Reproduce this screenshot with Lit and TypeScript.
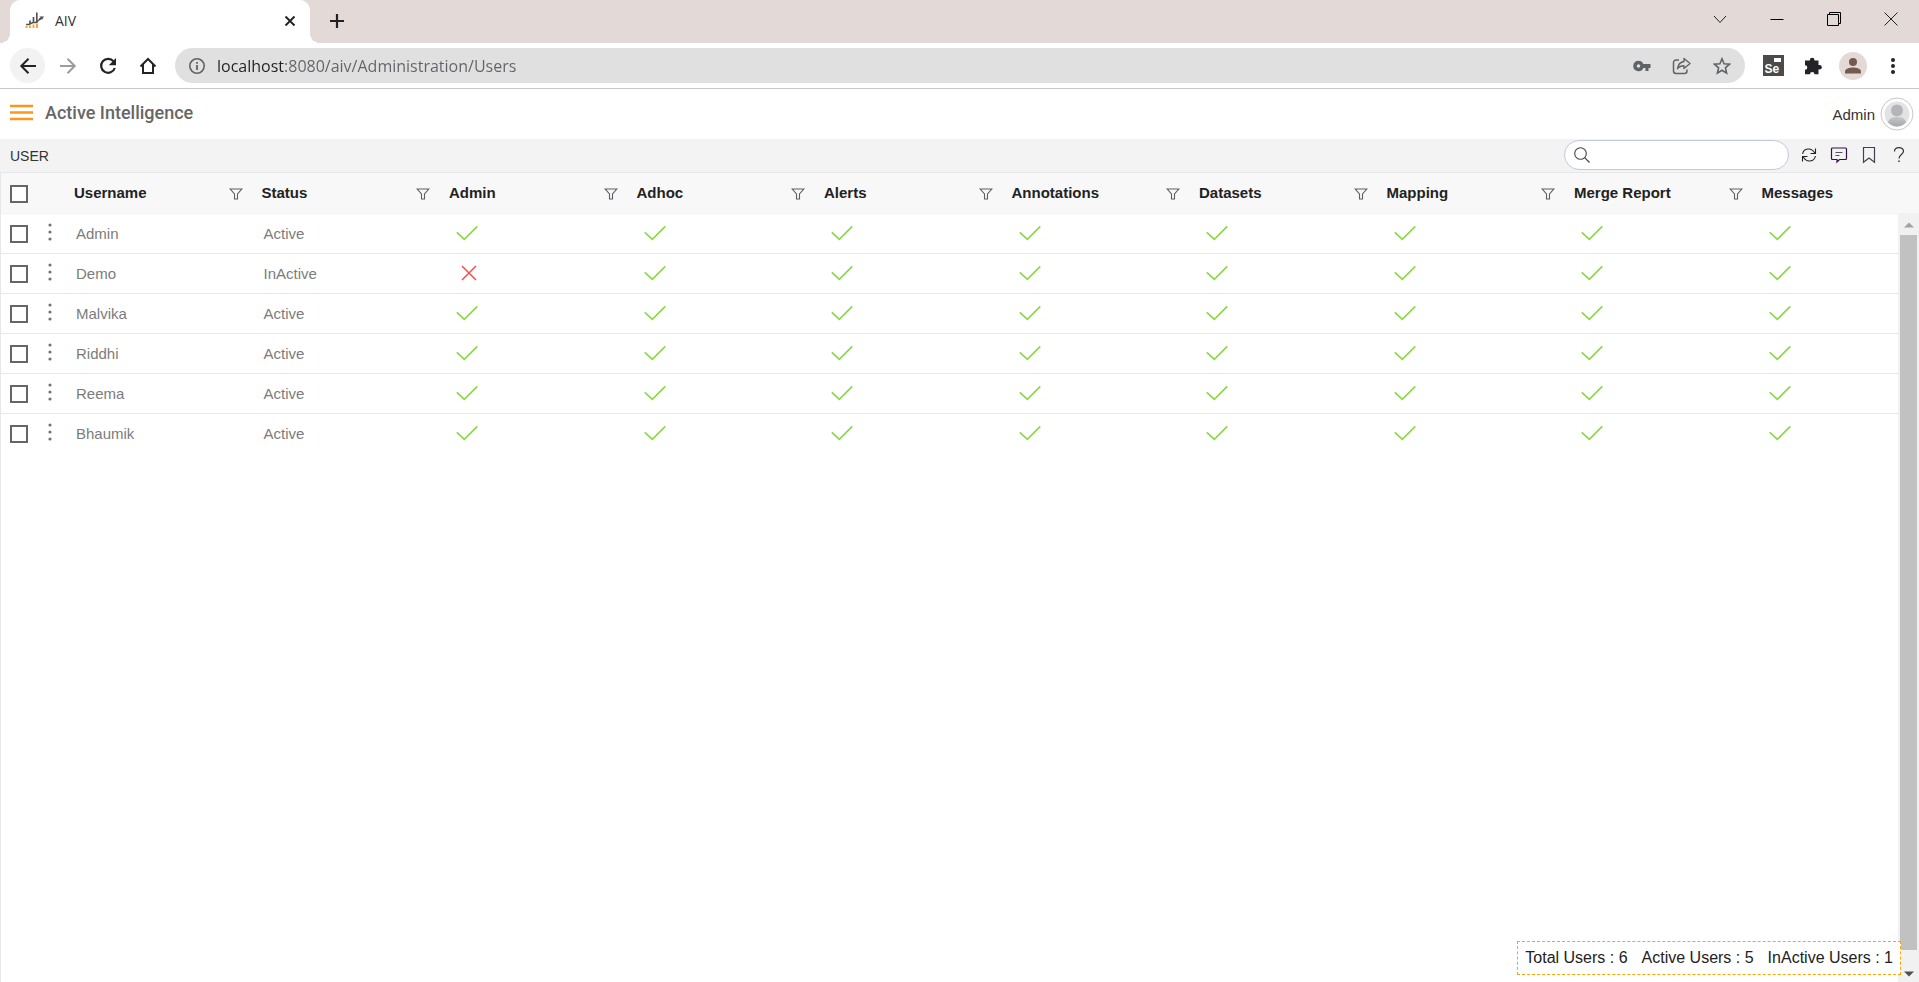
import { LitElement, html, css, svg, nothing } from "lit";
import { customElement, state } from "lit/decorators.js";

interface User {
  name: string;
  active: boolean;
  denied: string[];
}

const PERMISSIONS = ["Admin", "Adhoc", "Alerts", "Annotations", "Datasets", "Mapping", "Merge Report", "Messages"];
const COLUMNS = ["Username", "Status", ...PERMISSIONS];

const USERS: User[] = [
  { name: "Admin", active: true, denied: [] },
  { name: "Demo", active: false, denied: ["Admin"] },
  { name: "Malvika", active: true, denied: [] },
  { name: "Riddhi", active: true, denied: [] },
  { name: "Reema", active: true, denied: [] },
  { name: "Bhaumik", active: true, denied: [] },
];

const icon = (w: number, h: number, body: unknown) =>
  html`<svg width=${w} height=${h} viewBox="0 0 ${w} ${h}" fill="none" aria-hidden="true">${body}</svg>`;

const icons = {
  favicon: icon(20, 17, svg`
    <path d="M1 12.5H4L8 10.500 11 10.500 17.500 5" stroke="#555" stroke-width="1.500"/>
    <path d="M14.500 4.500H19L17 8Z" fill="#555"/>
    <path d="M5 12V8.500M8.500 11V5M11.800 11V.5M15 8V6" stroke="#555" stroke-width="1.700"/>
    <path d="M1.500 14V16M5 13.500V16M8.500 12.500V16M12 11.500V16" stroke="#f5a733" stroke-width="2"/>`),
  tabClose: icon(12, 12, svg`<path d="M1.500 1.500 10.500 10.500M10.500 1.500 1.500 10.500" stroke="#222" stroke-width="1.900"/>`),
  plus: icon(16, 16, svg`<path d="M8 1V15M1 8H15" stroke="#222" stroke-width="2.200"/>`),
  chevron: icon(16, 16, svg`<path d="M2 5 8 11.500 14 5" stroke="#222" stroke-width="1"/>`),
  minimize: icon(14, 14, svg`<path d="M.5 7.500H13.500" stroke="#000" stroke-width="1"/>`),
  restore: icon(14, 14, svg`<path d="M.5 2.500H11.500V13.500H.5ZM2.500 2.500V.5H13.500V11.500H11.500" stroke="#000" stroke-width="1"/>`),
  close: icon(14, 14, svg`<path d="M.5 .5 13.500 13.500M13.500 .5.5 13.500" stroke="#222" stroke-width="1"/>`),
  back: icon(18, 18, svg`<path d="M17 9H2.500M9.500 1.800 2.300 9 9.500 16.200" stroke="#222428" stroke-width="2"/>`),
  forward: icon(18, 18, svg`<path d="M1 9H15.500M8.500 1.800 15.700 9 8.500 16.200" stroke="#9b9c9e" stroke-width="2"/>`),
  reload: icon(18, 18, svg`<path d="M14.600 4.400A7 7 0 1 0 15.800 11" stroke="#222428" stroke-width="2.200"/><path d="M17 1V8.200H9.800Z" fill="#222428"/>`),
  home: icon(18, 18, svg`<path d="M4 7V16H14V7M1.500 9.500 9 2 16.500 9.500" stroke="#222428" stroke-width="2"/>`),
  info: icon(18, 18, svg`<circle cx="9" cy="9" r="7.200" stroke="#5f6368" stroke-width="1.600"/><path d="M9 8V13M9 5V6.800" stroke="#5f6368" stroke-width="1.800"/>`),
  key: icon(18, 12, svg`<path fill-rule="evenodd" d="M5.500 .8A5.200 5.200 0 1 0 10.300 8H12.500V11H15.500V8H17.500V4H10.300A5.200 5.200 0 0 0 5.500.8ZM5.500 4.200A1.800 1.800 0 1 1 5.500 7.800 1.800 1.800 0 0 1 5.500 4.200Z" fill="#5f6368"/>`),
  share: icon(20, 18, svg`<path d="M7 3H4A2.500 2.500 0 0 0 1.500 5.500V14A2.500 2.500 0 0 0 4 16.500H12.500A2.500 2.500 0 0 0 15 14V12.500" stroke="#5f6368" stroke-width="1.500"/><path d="M12 1.500 18 6.500 12 11.500V8.700C9 8.700 7 9.600 5.500 11.700 6 8 8.200 5 12 4.500Z" stroke="#5f6368" stroke-width="1.400" stroke-linejoin="round"/>`),
  star: icon(18, 18, svg`<path d="M9 1.800 11.100 6.700 16.500 7.200 12.400 10.800 13.600 16.100 9 13.300 4.400 16.100 5.600 10.800 1.500 7.200 6.900 6.700Z" stroke="#5f6368" stroke-width="1.600"/>`),
  puzzle: icon(18, 18, svg`<path d="M6 3.500A2.200 2.200 0 0 1 10.400 3.500H14.500V7.900A2.200 2.200 0 0 1 14.500 12.300V17.200H10.500A2.200 2.200 0 0 0 6 17.200H1V12.800A2.300 2.300 0 0 0 1 8.200V3.500Z" fill="#222428"/><circle cx="8.200" cy="3" r="2.200" fill="#222428"/><circle cx="15.500" cy="10.200" r="2.300" fill="#222428"/>`),
  person: icon(28, 28, svg`<circle cx="14" cy="14" r="14" fill="#e3dad8"/><circle cx="14" cy="10" r="4" fill="#755b4e"/><path d="M6 21.500V19.500C6 16.800 10.500 15.500 14 15.500S22 16.800 22 19.500V21.500Z" fill="#755b4e"/>`),
  kebab: icon(6, 18, svg`<circle cx="3" cy="3" r="2" fill="#222428"/><circle cx="3" cy="9" r="2" fill="#222428"/><circle cx="3" cy="15" r="2" fill="#222428"/>`),
  menu: icon(23, 17, svg`<path d="M0 2H23M0 8.500H23M0 15H23" stroke="#fa981c" stroke-width="2.400"/>`),
  avatar: icon(34, 34, svg`
    <defs>
      <linearGradient id="av" x1="0" y1="0" x2="0" y2="1"><stop offset="0" stop-color="#c6c7c9"/><stop offset="1" stop-color="#a4a5a8"/></linearGradient>
      <clipPath id="ac"><circle cx="17" cy="17" r="12.500"/></clipPath>
    </defs>
    <circle cx="17" cy="17" r="16" fill="#fff" stroke="#c8c8c8" stroke-width="1"/>
    <circle cx="17" cy="17" r="12.500" fill="#e2e3e5"/>
    <g clip-path="url(#ac)"><circle cx="17" cy="13.500" r="6" fill="#b4b5b8"/><path d="M8 30C7 23 10 20 17 20S27 23 26 30Z" fill="url(#av)"/></g>`),
  search: icon(18, 18, svg`<circle cx="7.500" cy="7.500" r="5.800" stroke="#444" stroke-width="1.100"/><path d="M11.700 11.700 16.500 16.500" stroke="#444" stroke-width="1.200"/>`),
  refresh: icon(16, 16, svg`<path d="M1.600 7C2.500 1.200 10.500-.2 14 6.500M14.500 1.500V6.500H9.500M14.400 9C13.500 14.800 5.500 16.200 2 9.500M1.500 14.500V9.500H6.500" stroke="#222" stroke-width="1.100"/>`),
  comment: icon(18, 18, svg`<path d="M2.500 2H15.500A1 1 0 0 1 16.500 3V12.500A1 1 0 0 1 15.500 13.500H9.500L7 16V13.500H2.500A1 1 0 0 1 1.500 12.500V3A1 1 0 0 1 2.500 2Z" stroke="#3a0f45" stroke-width="1.200"/><path d="M5.500 6.500H12.500M5.500 9.500H9.500" stroke="#555" stroke-width="1.200"/>`),
  bookmark: icon(16, 18, svg`<path d="M2.500 1.500H13.500V16.300L8 12 2.500 16.300Z" stroke="#3d4450" stroke-width="1.200"/>`),
  help: icon(12, 18, svg`<path d="M1.500 5.500C1.500 .5 10.500 .5 10.500 5.200 10.500 8.500 6 8.500 6 12.500" stroke="#333" stroke-width="1.200"/><path d="M6 14.500V16" stroke="#333" stroke-width="1.500"/>`),
  filter: icon(14, 12, svg`<path d="M1.200 1H12.800L8.500 6V11H5.500V6Z" stroke="#5a5f66" stroke-width="1.100"/>`),
  check: icon(22, 16, svg`<path d="M.8 7.300 8.300 14.400 21.300 1.300" stroke="#8bd847" stroke-width="1.700"/>`),
  cross: icon(16, 16, svg`<path d="M1 1 15 15M15 1 1 15" stroke="#f0504c" stroke-width="1.500"/>`),
  rowDots: icon(4, 18, svg`<circle cx="2" cy="2" r="1.600" fill="#757575"/><circle cx="2" cy="9" r="1.600" fill="#757575"/><circle cx="2" cy="16" r="1.600" fill="#757575"/>`),
  up: icon(10, 6, svg`<path d="M0 5.500 5 .5 10 5.500Z" fill="#a3a3a3"/>`),
  down: icon(10, 6, svg`<path d="M0 .5 5 5.500 10 .5Z" fill="#505050"/>`),
};

const base = css`
  * { box-sizing: border-box; }
  button {
    display: flex;
    align-items: center;
    justify-content: center;
    flex: none;
    padding: 0;
    border: 0;
    background: none;
    font: inherit;
    color: inherit;
  }
  svg { display: block; flex: none; }
`;

@customElement("browser-frame")
export class BrowserFrame extends LitElement {
  static styles = [base, css`
    :host { display: block; flex: none; font-family: "Open Sans", "Noto Sans", sans-serif; }
    .strip { display: flex; align-items: stretch; height: 43px; padding-left: 10px; background: #e3dad8; }
    .tab {
      position: relative;
      display: flex;
      align-items: center;
      gap: 10px;
      width: 300px;
      padding: 0 10px 2px 15px;
      border-radius: 10px 10px 0 0;
      background: #fff;
      color: #333;
      font-size: 14px;
    }
    .tab::before, .tab::after {
      content: "";
      position: absolute;
      bottom: 0;
      width: 10px;
      height: 10px;
    }
    .tab::before { right: 100%; background: radial-gradient(circle at 0 0, #e3dad8 10px, #fff 10px); }
    .tab::after { left: 100%; background: radial-gradient(circle at 100% 0, #e3dad8 10px, #fff 10px); }
    .title { flex: 1; }
    .tab button { width: 20px; height: 20px; }
    .new { width: 32px; margin: 0 auto 0 11px; padding-bottom: 1px; }
    .win { width: 57px; padding-bottom: 6px; }
    .bar { display: flex; align-items: center; height: 46px; padding: 0 10px; gap: 5px; border-bottom: 1px solid #c8c8c8; background: #fff; }
    .nav { width: 35px; height: 35px; border-radius: 50%; }
    .nav.lit { background: #f2f2f2; }
    .omni { display: flex; flex: 1; align-items: center; min-width: 0; height: 35px; margin: 0 7px 0 5px; padding: 0 7px 0 13px; border-radius: 18px; background: #e0e0e0; }
    .url {
      flex: 1;
      min-width: 0;
      height: 35px;
      margin-left: 5px;
      padding: 0 0 0 6px;
      border: 0;
      outline: 0;
      font: 16px "Open Sans", "Noto Sans", sans-serif;
      color: transparent;
      background: linear-gradient(90deg, #202124 73px, #5f6368 73px);
      -webkit-background-clip: text;
      background-clip: text;
    }
    .tools { display: flex; gap: 8px; }
    .tools button { width: 32px; height: 32px; }
    .se { display: flex; align-items: flex-end; width: 21px; height: 21px; padding-left: 2px; background: #4b4b4b; color: #fff; font: bold 12px/14px "Liberation Sans", sans-serif; position: relative; }
    .se::after { content: ""; position: absolute; top: 3px; right: 3px; width: 7px; height: 4px; background: #fff; }
  `];

  render() {
    return html`
      <div class="strip">
        <div class="tab">
          ${icons.favicon}<span class="title">AIV</span>
          <button aria-label="Close tab">${icons.tabClose}</button>
        </div>
        <button class="new" aria-label="New tab">${icons.plus}</button>
        <button class="win" aria-label="Search tabs">${icons.chevron}</button>
        <button class="win" aria-label="Minimize">${icons.minimize}</button>
        <button class="win" aria-label="Restore">${icons.restore}</button>
        <button class="win" aria-label="Close">${icons.close}</button>
      </div>
      <div class="bar">
        <button class="nav lit" aria-label="Back">${icons.back}</button>
        <button class="nav" aria-label="Forward">${icons.forward}</button>
        <button class="nav" aria-label="Reload">${icons.reload}</button>
        <button class="nav" aria-label="Home">${icons.home}</button>
        <div class="omni">
          ${icons.info}
          <input class="url" aria-label="Address" .value=${"localhost:8080/aiv/Administration/Users"} />
          <div class="tools">
            <button aria-label="Passwords">${icons.key}</button>
            <button aria-label="Share">${icons.share}</button>
            <button aria-label="Bookmark">${icons.star}</button>
          </div>
        </div>
        <div class="tools">
          <button aria-label="Selenium"><span class="se">Se</span></button>
          <button aria-label="Extensions">${icons.puzzle}</button>
          <button aria-label="Profile">${icons.person}</button>
          <button aria-label="Browser menu">${icons.kebab}</button>
        </div>
      </div>
    `;
  }
}

@customElement("user-table")
export class UserTable extends LitElement {
  @state() private users: User[] = USERS;

  static styles = [base, css`
    :host { display: block; position: relative; flex: 1; min-height: 0; overflow: hidden; border: 1px solid #e7e7e7; border-bottom: 0; border-right: 0; }
    table { width: calc(100% + 21px); table-layout: fixed; border-collapse: collapse; }
    th, td { height: 40px; padding: 0; text-align: left; vertical-align: middle; }
    tr { border-bottom: 1px solid #e7e7e7; }
    tbody tr:last-child { border-bottom: 0; }
    thead { background: #f8f8f8; }
    thead tr { border-bottom-color: #f2f2f2; }
    .pick { width: 34px; padding: 2px 0 0 9px; }
    .more { width: 30px; }
    .more button { width: 30px; height: 30px; padding-bottom: 2px; }
    .head { display: flex; align-items: center; justify-content: space-between; padding: 0 10px 0 9px; color: #222; font-size: 15px; }
    .filter { padding-top: 3px; }
    td { color: #7c7c7c; font-size: 15px; }
    .text { padding-left: 11px; }
    .perm { padding-left: 16px; }
    .perm.no { padding-left: 21px; }
    .box { display: block; appearance: none; width: 18px; height: 18px; margin: 0; border: 2px solid #666; background: #fff; }
    .scroll { position: absolute; top: 41px; right: 0; bottom: 0; width: 21px; padding: 8px 2px 5px; display: flex; flex-direction: column; align-items: center; gap: 7px; background: #f1f1f1; }
    .thumb { flex: 1; align-self: stretch; margin-bottom: 14px; background: #c1c1c1; }
    .totals { position: absolute; right: 18px; bottom: 7px; display: flex; gap: 14px; padding: 7px; border: 1px dashed #ffa500; background: #fff; color: #222; font-size: 16px; line-height: 18px; white-space: nowrap; }
  `];

  private cell(user: User, permission: string) {
    const denied = user.denied.includes(permission);
    return html`<td class="perm ${denied ? "no" : ""}">${denied ? icons.cross : icons.check}</td>`;
  }

  render() {
    const active = this.users.filter((u) => u.active).length;
    return html`
      <table>
        <thead>
          <tr>
            <th class="pick"><input class="box" type="checkbox" aria-label="Select all users" /></th>
            <th class="more"></th>
            ${COLUMNS.map((c) => html`
              <th scope="col">
                <div class="head"><span>${c}</span><button class="filter" aria-label="Filter ${c}">${c === "Messages" ? nothing : icons.filter}</button></div>
              </th>`)}
          </tr>
        </thead>
        <tbody>
          ${this.users.map((u) => html`
            <tr>
              <td class="pick"><input class="box" type="checkbox" aria-label="Select ${u.name}" /></td>
              <td class="more"><button aria-label="Actions for ${u.name}">${icons.rowDots}</button></td>
              <td class="text">${u.name}</td>
              <td class="text">${u.active ? "Active" : "InActive"}</td>
              ${PERMISSIONS.map((p) => this.cell(u, p))}
            </tr>`)}
        </tbody>
      </table>
      <div class="scroll" aria-hidden="true">${icons.up}<div class="thumb"></div>${icons.down}</div>
      <div class="totals">
        <span>Total Users : ${this.users.length}</span>
        <span>Active Users : ${active}</span>
        <span>InActive Users : ${this.users.length - active}</span>
      </div>
    `;
  }
}

@customElement("app-root")
export class AppRoot extends LitElement {
  static styles = [base, css`
    :host { display: flex; flex-direction: column; height: 100vh; overflow: hidden; background: #fff; font-family: "Liberation Sans", Arial, sans-serif; }
    header { display: flex; flex: none; align-items: center; height: 50px; padding: 0 5px 0 10px; }
    .brand { margin: 0 auto 0 12px; padding-bottom: 4px; color: #666; font: 500 18px Roboto, "Liberation Sans", sans-serif; }
    .burger { padding-bottom: 4px; }
    .account { gap: 5px; color: #333; font-size: 15px; }
    .crumbs { display: flex; flex: none; align-items: center; height: 33px; padding: 0 8px 0 10px; gap: 8px; background: #f3f3f3; }
    h1 { margin: 0 auto 0 0; color: #333; font-size: 14px; font-weight: normal; }
    .search { display: flex; align-items: center; width: 225px; height: 30px; margin-bottom: 2px; padding: 0 12px 0 8px; gap: 6px; border: 1px solid #c3c9dc; border-radius: 15px; background: #fff; }
    .search input { flex: 1; min-width: 0; border: 0; outline: 0; background: none; font-size: 14px; }
    .actions { display: flex; gap: 6px; padding-bottom: 2px; }
    .actions button { width: 24px; height: 24px; }
  `];

  render() {
    return html`
      <browser-frame></browser-frame>
      <header>
        <button class="burger" aria-label="Menu">${icons.menu}</button>
        <span class="brand">Active Intelligence</span>
        <button class="account">Admin ${icons.avatar}</button>
      </header>
      <div class="crumbs">
        <h1>USER</h1>
        <label class="search">${icons.search}<input type="text" aria-label="Search users" /></label>
        <div class="actions">
          <button aria-label="Refresh">${icons.refresh}</button>
          <button aria-label="Comments">${icons.comment}</button>
          <button aria-label="Bookmark">${icons.bookmark}</button>
          <button aria-label="Help">${icons.help}</button>
        </div>
      </div>
      <user-table></user-table>
    `;
  }
}
